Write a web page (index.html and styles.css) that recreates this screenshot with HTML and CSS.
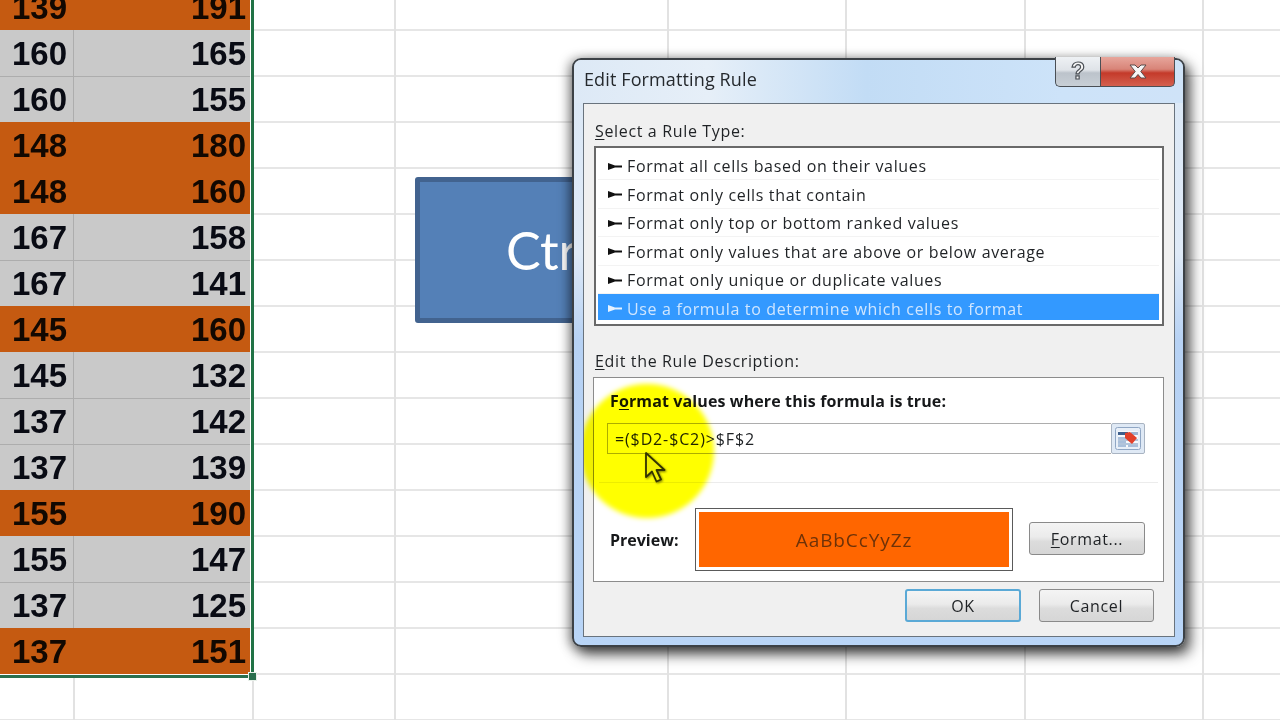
FILE: index.html
```html
<!DOCTYPE html>
<html lang="en">
<head>
<meta charset="utf-8">
<title>Edit Formatting Rule</title>
<link rel="stylesheet" href="styles.css">
</head>
<body>
<div class="stage">
  <div class="selection">
    <div class="row orange"><span>139</span><span>191</span></div>
    <div class="row grey"><span>160</span><span>165</span></div>
    <div class="row grey"><span>160</span><span>155</span></div>
    <div class="row orange"><span>148</span><span>180</span></div>
    <div class="row orange"><span>148</span><span>160</span></div>
    <div class="row grey"><span>167</span><span>158</span></div>
    <div class="row grey"><span>167</span><span>141</span></div>
    <div class="row orange"><span>145</span><span>160</span></div>
    <div class="row grey"><span>145</span><span>132</span></div>
    <div class="row grey"><span>137</span><span>142</span></div>
    <div class="row grey"><span>137</span><span>139</span></div>
    <div class="row orange"><span>155</span><span>190</span></div>
    <div class="row grey"><span>155</span><span>147</span></div>
    <div class="row grey"><span>137</span><span>125</span></div>
    <div class="row orange"><span>137</span><span>151</span></div>
    <i class="handle"></i>
  </div>

  <div class="shape">Ctrl</div>

  <div class="dialog">
    <div class="titlebar">
      <div class="title">Edit Formatting Rule</div>
      <div class="winbtns">
        <div class="winbtn help">?</div>
        <div class="winbtn close">
          <svg width="18" height="15" viewBox="0 0 18 15"><path class="xmark" d="M1 1h5l3 3 3-3h5l-5.200 6.500 5.200 6.500h-5l-3-3.500-3 3.500h-5l5.200-6.500z"/></svg>
        </div>
      </div>
    </div>
    <div class="panel">
      <i class="spot"></i>
      <div class="label first"><u>S</u>elect a Rule Type:</div>
      <div class="list">
        <div class="item"><svg class="arrow" viewBox="0 0 14 7"><path d="M0 0l7 2.600h7v1.800h-7l-7 2.600z"/></svg>Format all cells based on their values</div>
        <div class="item"><svg class="arrow" viewBox="0 0 14 7"><path d="M0 0l7 2.600h7v1.800h-7l-7 2.600z"/></svg>Format only cells that contain</div>
        <div class="item"><svg class="arrow" viewBox="0 0 14 7"><path d="M0 0l7 2.600h7v1.800h-7l-7 2.600z"/></svg>Format only top or bottom ranked values</div>
        <div class="item"><svg class="arrow" viewBox="0 0 14 7"><path d="M0 0l7 2.600h7v1.800h-7l-7 2.600z"/></svg>Format only values that are above or below average</div>
        <div class="item"><svg class="arrow" viewBox="0 0 14 7"><path d="M0 0l7 2.600h7v1.800h-7l-7 2.600z"/></svg>Format only unique or duplicate values</div>
        <div class="item selected"><svg class="arrow" viewBox="0 0 14 7"><path d="M0 0l7 2.600h7v1.800h-7l-7 2.600z"/></svg>Use a formula to determine which cells to format</div>
      </div>
      <div class="label second"><u>E</u>dit the Rule Description:</div>
      <div class="desc">
        <div class="heading">F<u>o</u>rmat values where this formula is true:</div>
        <div class="formula">
          <div class="field">=($D2-$C2)&gt;$F$2</div>
          <div class="picker">
            <svg width="26" height="23" viewBox="0 0 26 23">
              <rect x="0.500" y="0.500" width="25" height="22" rx="2" fill="#e8eff8" stroke="#8fa6c4"/>
              <path d="M3 4h20v16H3z" fill="#f6f9fd"/>
              <path d="M3 5h10v3H3z" fill="#3f5f8c"/>
              <path d="M16 5h7v3h-7z" fill="#9db4d2"/>
              <path d="M3 10h8v2H3zM3 14h8v2H3zM3 18h8v2H3zM13 18h10v2H13z" fill="#a9bfdb"/>
              <path d="M3 13h20M3 17h20" stroke="#6f8fb8" fill="none"/>
              <path d="M10 6l5-1 7 6-5 6-7-6z" fill="#e2402a"/>
            </svg>
          </div>
        </div>
        <div class="rule"></div>
        <div class="previewrow">
          <div class="previewlabel">Preview:</div>
          <div class="previewbox"><div class="swatch">AaBbCcYyZz</div></div>
          <div class="btn format"><u>F</u>ormat...</div>
        </div>
      </div>
      <div class="footer">
        <div class="btn ok">OK</div>
        <div class="btn cancel">Cancel</div>
      </div>
    </div>
  </div>

  <svg class="cursor" width="24" height="34" viewBox="0 0 24 34">
    <path d="M2 2v24l6-5.500 4.500 10 4.500-2-4.500-9.500h8z" fill="#f1f0fb" stroke="#33333d" stroke-width="1.800" stroke-linejoin="round"/>
  </svg>
</div>
</body>
</html>
```
FILE: styles.css
```css
* { box-sizing: border-box; }
html, body { margin: 0; padding: 0; }
body { width: 1280px; height: 720px; overflow: hidden; background: #fff; }
u { text-underline-offset: 2px; text-decoration-thickness: 1px; }

.stage {
  position: relative;
  width: 1280px;
  height: 720px;
  overflow: hidden;
  background-color: #fff;
  background-image:
    linear-gradient(#e2e2e2, #e2e2e2),
    linear-gradient(#e2e2e2, #e2e2e2),
    linear-gradient(#e2e2e2, #e2e2e2),
    linear-gradient(#e2e2e2, #e2e2e2),
    linear-gradient(#e2e2e2, #e2e2e2),
    linear-gradient(#e2e2e2, #e2e2e2),
    linear-gradient(#e2e2e2, #e2e2e2),
    linear-gradient(to bottom, #e6e6e6 2px, transparent 2px);
  background-size: 2px 100%, 2px 100%, 2px 100%, 2px 100%, 2px 100%, 2px 100%, 2px 100%, 100% 46px;
  background-position: 73px 0, 252px 0, 394px 0, 667px 0, 845px 0, 1024px 0, 1202px 0, 0 29px;
  background-repeat: no-repeat, no-repeat, no-repeat, no-repeat, no-repeat, no-repeat, no-repeat, repeat-y;
}

/* Spreadsheet block */
.selection {
  position: relative;
  width: 254px;
  margin-top: -16px;
  padding: 0 1px 1px 0;
  background: #fff;
  border-right: 3px solid #217346;
  border-bottom: 3px solid #2a6f4e;
}
.row {
  display: grid;
  grid-template-columns: 73px 1fr;
  height: 46px;
  font: bold 33px/48px "Liberation Sans", Arial, sans-serif;
  color: #111;
}
.row span { height: 46px; text-align: right; padding-right: 6px; }
.row span + span { padding-right: 4px; }
.orange { background: #c55a11; color: #120801; }
.grey { background: #c9c9c9; color: #090b14; }
.grey + .grey span { box-shadow: inset 0 1px 0 #adadad; }
.grey span + span { border-left: 1px solid #adadad; }
.handle {
  position: absolute;
  right: -6px;
  bottom: -6px;
  width: 9px;
  height: 9px;
  background: #2a6f4e;
  border: 1px solid #e8f0ea;
}

/* Shape */
.shape {
  position: absolute;
  left: 415px;
  top: 177px;
  width: 340px;
  height: 146px;
  padding-left: 86px;
  display: flex;
  align-items: center;
  background: #5480b7;
  border: 5px solid #42638f;
  border-radius: 3px;
  font: 52px "Lato", sans-serif;
  color: #fff;
}

/* Dialog window */
.dialog {
  position: absolute;
  left: 572px;
  top: 58px;
  width: 613px;
  height: 589px;
  display: flex;
  flex-direction: column;
  padding: 0 8px 8px 9px;
  border: 2px solid #3c4146;
  border-radius: 9px;
  background: linear-gradient(to bottom, #dbe8f6 0, #dfeaf7 33%, #b7d2f4 48%, #b9d5f7 100%);
  box-shadow: 5px 7px 14px rgba(0, 0, 0, .7), -3px 1px 12px rgba(0, 0, 0, .4);
}
.titlebar {
  display: flex;
  justify-content: space-between;
  align-items: flex-start;
  height: 43px;
  margin: 0 -8px 0 -9px;
  padding: 0 8px 0 10px;
  background: linear-gradient(to right, #dde9f6 0, #e6eff8 22%, #c2dcf5 48%, #cde3f9 80%, #cfe3f8 100%);
  border-radius: 7px 7px 0 0;
}
.title {
  font: 18px/39px "Open Sans", sans-serif;
  letter-spacing: .12px;
  color: #25292d;
}
.winbtns { display: flex; margin-top: -3px; height: 30px; }
.winbtn {
  display: flex;
  align-items: center;
  justify-content: center;
  height: 30px;
  border: 1px solid #4a4f55;
  border-top: 0;
}
.help {
  width: 45px;
  border-right: 0;
  border-radius: 0 0 0 5px;
  background: linear-gradient(to bottom, #eef1f4 0, #dfe3e8 45%, #bcc3cb 55%, #c8cfd6 100%);
  font: bold 23px/1 "Liberation Sans", sans-serif;
  color: #f6f6f6;
  -webkit-text-stroke: 1.200px #4a4f55;
}
.close {
  width: 75px;
  border-radius: 0 0 5px 0;
  background: linear-gradient(to bottom, #e7a69c 0, #d88478 42%, #c43a2a 55%, #d4604f 100%);
}
.xmark { fill: #f6f6f6; stroke: #5a4a48; stroke-width: 1; }

.panel {
  position: relative;
  flex: 1;
  overflow: hidden;
  padding: 0 10px;
  background: #f0f0f0;
  border: 1px solid #69737d;
  font: 16px/20px "Open Sans", sans-serif;
  letter-spacing: .65px;
  color: #1f2225;
}
.spot {
  position: absolute;
  left: -4px;
  top: 280px;
  width: 134px;
  height: 134px;
  z-index: 3;
  border-radius: 50%;
  background: #ffff00;
  filter: blur(2.500px);
  mix-blend-mode: multiply;
}
.label.first { margin: 17px 0 5px; padding-left: 1px; }
.label.second { margin: 25px 0 6px; padding-left: 1px; }

.list {
  height: 180px;
  padding: 5px 3px 0 2px;
  background: #fff;
  border: 2px solid #696969;
  display: flex;
  flex-direction: column;
  gap: 2.600px;
}
.item {
  display: flex;
  align-items: center;
  gap: 5px;
  height: 26px;
  padding-left: 10px;
  box-shadow: 0 1px 0 #f3f3f3;
  white-space: nowrap;
}
.item.selected {
  margin-top: -2px;
  padding-top: 4px;
  background: #3399ff;
  color: #d0e6ff;
  box-shadow: none;
}
.arrow { width: 14px; height: 7px; fill: #111; flex: none; }
.selected .arrow { fill: #e6f2ff; }

.desc {
  height: 205px;
  margin: 0 0 0 -1px;
  padding-top: 13px;
  background: #fff;
  border: 1px solid #8c8c8c;
}
.heading { margin-left: 16px; font-weight: 700; letter-spacing: .12px; color: #16181a; }
.formula {
  display: flex;
  height: 31px;
  margin: 12px 18px 0 13px;
}
.field {
  flex: 1;
  padding-left: 7px;
  border: 1px solid #adadad;
  border-right: 0;
  line-height: 30px;
  letter-spacing: .87px;
}
.picker {
  display: flex;
  align-items: center;
  justify-content: center;
  width: 34px;
  background: #dfe9f5;
  border: 1px solid #a9b4c2;
  border-radius: 2px;
}
.rule { height: 1px; margin: 28px 5px 0 5px; background: #ececec; }
.previewrow {
  display: flex;
  align-items: center;
  height: 63px;
  margin: 25px 0 0 16px;
}
.previewlabel { width: 85px; font-weight: 700; letter-spacing: 0; color: #16181a; }
.previewbox {
  width: 318px;
  height: 63px;
  padding: 3px;
  border: 1px solid #5a5a5a;
}
.swatch {
  display: flex;
  align-items: center;
  justify-content: center;
  height: 100%;
  background: #ff6600;
  color: #6e3208;
  font-size: 19px;
  letter-spacing: .9px;
}
.btn {
  display: flex;
  align-items: center;
  justify-content: center;
  height: 33px;
  border: 1px solid #8a8a8a;
  border-radius: 3px;
  background: linear-gradient(to bottom, #f4f4f4 0, #ebebeb 45%, #dcdcdc 60%, #d6d6d6 100%);
}
.format { width: 116px; margin: -2px 0 0 16px; }
.footer {
  display: flex;
  justify-content: flex-end;
  gap: 18px;
  margin: 7px 10px 0 0;
}
.ok { width: 116px; border: 2px solid #5aa9d6; }
.cancel { width: 115px; }

.cursor {
  position: absolute;
  left: 644px;
  top: 451px;
  filter: drop-shadow(1px 1px 1px rgba(40, 40, 0, .6));
}
```
